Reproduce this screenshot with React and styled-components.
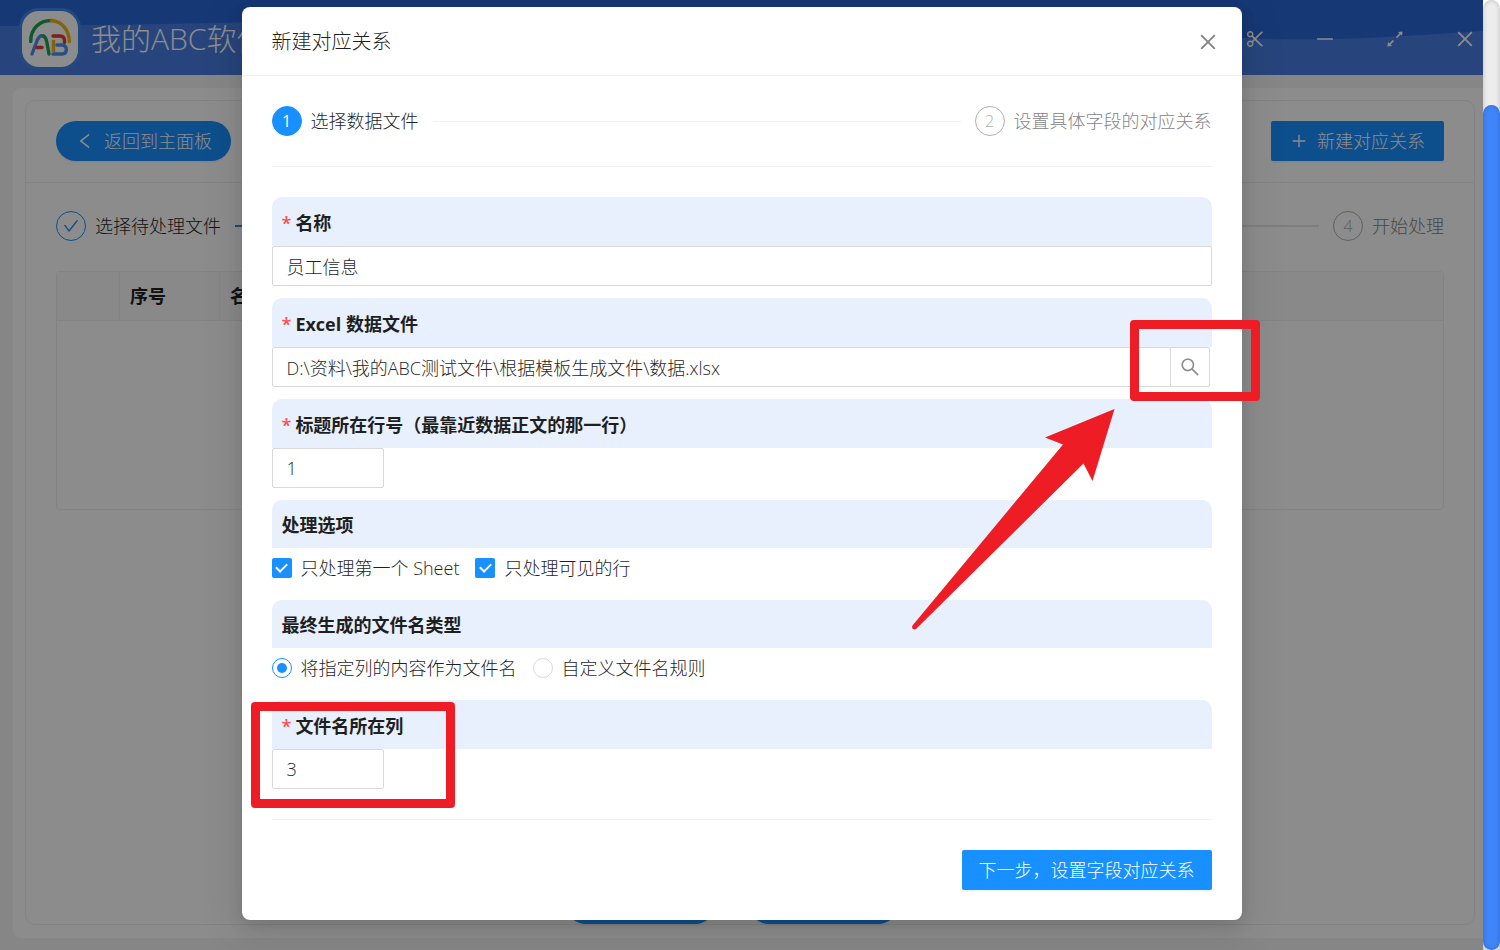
import React, { useState } from 'react'
import styled, { createGlobalStyle } from 'styled-components'
import {
  AiOutlineArrowsAlt,
  AiOutlineCheck,
  AiOutlineClose,
  AiOutlineLeft,
  AiOutlineMinus,
  AiOutlinePlus,
  AiOutlineScissor,
  AiOutlineSearch,
} from 'react-icons/ai'

const GlobalStyle = createGlobalStyle`
  * { box-sizing: border-box; }
  body {
    margin: 0;
    overflow: hidden;
    font-family: "Open Sans", "Noto Sans CJK SC", sans-serif;
    font-size: 18px;
    font-weight: 300;
    line-height: 28px;
    color: #1f1f1f;
  }
  button, input { font: inherit; color: inherit; }
  button { cursor: pointer; }
  svg { display: block; flex: none; }
`;

const Screen = styled.div`
  display: flex;
  height: 100vh;
`;

const Main = styled.div`
  position: relative;
  flex: 1;
  min-width: 0;
  display: flex;
  flex-direction: column;
  overflow: hidden;
  background: #f5f5f5;
`;

const ScrollTrack = styled.div`
  flex: none;
  width: 17px;
  display: flex;
  flex-direction: column;
  justify-content: flex-end;
  border-radius: 10px 10px 0 0;
  background: #ededed;
  box-shadow: inset 0 0 5px rgba(0, 0, 0, 0.2);
`;

const ScrollThumb = styled.div`
  height: 89%;
  border-radius: 10px;
  background: #3f85f9;
  box-shadow: inset 0 0 5px rgba(0, 0, 0, 0.2);
`;

const TopBar = styled.header`
  position: relative;
  flex: none;
  height: 75px;
  padding: 2px 7px 0 19px;
  display: flex;
  align-items: center;
  justify-content: space-between;
  background: #2866d6;
  color: #fff;
`;

const Wave = styled.svg`
  position: absolute;
  inset: 0;
  width: 100%;
  height: 100%;
`;

const Brand = styled.div`
  position: relative;
  display: flex;
  align-items: center;
  gap: 10px;
  font-size: 30px;
  line-height: 40px;
`;

const LogoBox = styled.div`
  width: 62px;
  height: 62px;
  padding: 6px;
  border: 3px solid #3f87ea;
  border-radius: 20px;
  background: #fff;
`;

const WindowButtons = styled.div`
  position: relative;
  display: flex;
  gap: 48px;
`;

const IconButton = styled.button`
  padding: 0;
  border: 0;
  background: none;
  font-size: 22px;
  color: ${(p) => p.$color || '#fff'};
`;

const Card = styled.main`
  flex: 1;
  margin: 13px 0 12px 13px;
  padding: 12px 8px 13px 12px;
  display: flex;
  border-radius: 8px 0 0 8px;
  background: #fff;
`;

const Panel = styled.section`
  flex: 1;
  min-width: 0;
  display: flex;
  flex-direction: column;
  border: 1px solid #efefef;
  border-radius: 10px;
`;

const Toolbar = styled.div`
  height: 82px;
  padding: 0 30px 2px;
  display: flex;
  align-items: center;
  justify-content: space-between;
  border-bottom: 1px solid #efefef;
`;

const Button = styled.button`
  height: 40px;
  padding: 0 ${(p) => p.$pad || 17}px;
  display: flex;
  align-items: center;
  gap: 9px;
  border: 0;
  border-radius: ${(p) => (p.$round ? '20px' : '2px')};
  background: #1890ff;
  color: #fff;
  box-shadow: 0 2px 0 rgba(0, 0, 0, 0.04);
`;

const StepRow = styled.div`
  display: flex;
  align-items: center;
  gap: 14px;
  padding: ${(p) => p.$pad || '0'};
`;

const Step = styled.div`
  display: flex;
  align-items: center;
  gap: 9px;
  color: ${(p) => (p.$muted ? '#858585' : '#1f1f1f')};
`;

const StepDot = styled.span`
  width: 30px;
  height: 30px;
  display: flex;
  align-items: center;
  justify-content: center;
  border: 1px solid ${(p) => (p.$kind === 'wait' ? '#b0b0b0' : '#1890ff')};
  border-radius: 50%;
  background: ${(p) => (p.$kind === 'active' ? '#1890ff' : 'transparent')};
  color: ${(p) => ({ active: '#fff', done: '#1890ff', wait: '#b0b0b0' })[p.$kind]};
  font-size: 16px;
  font-weight: ${(p) => (p.$kind === 'active' ? 400 : 300)};
`;

const Tail = styled.span`
  flex: 1;
  height: ${(p) => p.$thick || 1}px;
  background: ${(p) => p.$color || '#f0f0f0'};
`;

const DataTable = styled.table`
  margin: 0 30px;
  border: 1px solid #efefef;
  border-radius: 4px;
  border-spacing: 0;
  table-layout: fixed;

  th {
    height: 49px;
    padding: 0 10px;
    border-right: 1px solid #efefef;
    border-bottom: 1px solid #efefef;
    background: #fafafa;
    font-weight: 700;
    text-align: left;
  }
  th:first-child { width: 63px; }
  th:nth-child(2) { width: 100px; }
  th:last-child { border-right: 0; }
  td { height: 188px; }
`;

const FooterBar = styled.div`
  margin-top: auto;
  padding-right: 36px;
  display: flex;
  justify-content: center;
  gap: 34px;
`;

const FooterButton = styled(Button)`
  width: 149px;
`;

const Overlay = styled.div`
  position: absolute;
  inset: 0;
  padding: 7px 0 30px;
  display: flex;
  align-items: flex-start;
  justify-content: center;
  background: rgba(0, 0, 0, 0.45);
`;

const Dialog = styled.div`
  position: relative;
  width: 100%;
  max-width: 1000px;
  border-radius: 8px;
  background: #fff;
  box-shadow: 0 6px 16px rgba(0, 0, 0, 0.1), 0 9px 40px 8px rgba(0, 0, 0, 0.08);
`;

const DialogHeader = styled.div`
  height: 69px;
  padding: 2px 23px 0 30px;
  display: flex;
  align-items: center;
  justify-content: space-between;
  border-bottom: 1px solid #f0f0f0;
`;

const DialogTitle = styled.h1`
  margin: 0;
  font-size: 20px;
  font-weight: 300;
`;

const DialogBody = styled.form`
  padding: 30px;
`;

const Divider = styled.hr`
  margin: 30px 0;
  border: 0;
  border-top: 1px solid #f0f0f0;
`;

const Fields = styled.div`
  display: flex;
  flex-direction: column;
  gap: 12px;
`;

const FieldLabel = styled.label`
  height: ${(p) => (p.$required ? 49 : 48)}px;
  padding: 2px 10px 0;
  display: flex;
  align-items: center;
  gap: 4px;
  border-radius: 10px 10px 0 0;
  background: #e8effd;
  font-weight: 700;
`;

const Star = styled.span`
  color: #ff4d4f;
  font-weight: 600;
`;

const TextInput = styled.input`
  display: block;
  width: ${(p) => p.$width || '100%'};
  height: 40px;
  padding: 0 14px;
  border: 1px solid #d9d9d9;
  border-radius: 2px;
  outline: 0;
  background: #fff;
`;

const SearchRow = styled.div`
  display: flex;
  padding-right: 2px;
`;

const SearchButton = styled.button`
  flex: none;
  width: 40px;
  margin-left: -1px;
  display: flex;
  align-items: center;
  justify-content: center;
  border: 1px solid #d9d9d9;
  border-radius: 0 2px 2px 0;
  background: #fff;
  color: #8c8c8c;
`;

const Choices = styled.div`
  height: 40px;
  display: flex;
  align-items: center;
  gap: 16px;
`;

const Choice = styled.label`
  display: flex;
  align-items: center;
  gap: 9px;
`;

const CheckBox = styled.input`
  appearance: none;
  width: 20px;
  height: 20px;
  margin: 0;
  display: grid;
  justify-content: center;
  align-content: start;
  padding-top: 3px;
  border: 1px solid #d9d9d9;
  border-radius: 2px;

  &:checked {
    border: 0;
    background: #1890ff;
  }
  &:checked::after {
    content: '';
    width: 5px;
    height: 9px;
    border: solid #fff;
    border-width: 0 2px 2px 0;
    transform: rotate(45deg);
  }
`;

const Radio = styled.input`
  appearance: none;
  width: 20px;
  height: 20px;
  margin: 0;
  display: grid;
  place-content: center;
  border: 1px solid #d9d9d9;
  border-radius: 50%;

  &:checked { border-color: #1890ff; }
  &:checked::after {
    content: '';
    width: 10px;
    height: 10px;
    border-radius: 50%;
    background: #1890ff;
  }
`;

const Actions = styled.div`
  display: flex;
  justify-content: flex-end;
`;

// highlight frames and arrow lie on top of the dialog
const Highlight = styled.div`
  position: absolute;
  left: ${(p) => p.$x}px;
  top: ${(p) => p.$y}px;
  width: ${(p) => p.$w}px;
  height: ${(p) => p.$h}px;
  border: 9px solid #ee1c25;
  border-radius: 4px;
  pointer-events: none;
`;

const Arrow = styled.svg`
  position: absolute;
  left: 668px;
  top: 400px;
  pointer-events: none;
`;

function Logo() {
  return (
    <svg width="44" height="44" viewBox="0 0 44 44" fill="none" strokeWidth="3.4" strokeLinecap="round" strokeLinejoin="round">
      <path d="M2.700 24.500C2.700 12 11 3.500 23.500 3.500" stroke="#1da452" />
      <path d="M23.500 3.500C34 4.500 41.300 13 41.300 24.500" stroke="#f0b310" />
      <path d="M4 37L9.500 22.500Q12 17.500 15.500 19" stroke="#4f8ff0" />
      <path d="M15.500 19Q18 20.500 18.800 25L21 37" stroke="#1da452" />
      <path d="M9 30.500H14" stroke="#e53935" />
      <path d="M25.500 23V35" stroke="#f0b310" strokeLinecap="butt" />
      <path d="M25 19H32Q36.500 19 36.500 24V25.500" stroke="#e53935" />
      <path d="M29 28H34Q38.300 28.500 38.300 32.500Q38.300 37 34 37H25" stroke="#4f8ff0" />
    </svg>
  )
}

function Field({ id, label, required, children }) {
  return (
    <div>
      <FieldLabel htmlFor={id} as={id ? 'label' : 'div'} $required={required}>
        {required && <Star>*</Star>}
        {label}
      </FieldLabel>
      {children}
    </div>
  )
}

function Background() {
  return (
    <>
      <TopBar>
        <Wave viewBox="0 0 1483 75" preserveAspectRatio="none">
          <path d="M0 26C120 25 190 24 260 22C520 16 800 20 1000 30C1120 36 1200 38 1242 38C1340 42 1400 36 1483 31V75H0Z" fill="#477ee2" />
        </Wave>
        <Brand>
          <LogoBox><Logo /></LogoBox>
          我的ABC软件
        </Brand>
        <WindowButtons>
          <IconButton aria-label="截图"><AiOutlineScissor /></IconButton>
          <IconButton aria-label="最小化"><AiOutlineMinus /></IconButton>
          <IconButton aria-label="最大化"><AiOutlineArrowsAlt /></IconButton>
          <IconButton aria-label="关闭"><AiOutlineClose /></IconButton>
        </WindowButtons>
      </TopBar>
      <Card>
        <Panel>
          <Toolbar>
            <Button $round $pad={19}><AiOutlineLeft size={20} />返回到主面板</Button>
            <Button $pad={19}><AiOutlinePlus size={18} />新建对应关系</Button>
          </Toolbar>
          <StepRow $pad="28px 30px 30px">
            <Step>
              <StepDot $kind="done"><AiOutlineCheck size={18} /></StepDot>
              选择待处理文件
            </Step>
            <Tail $thick={2} $color="#1890ff" />
            <Tail $thick={2} $color="#e6e6e6" />
            <Step $muted>
              <StepDot $kind="wait">4</StepDot>
              开始处理
            </Step>
          </StepRow>
          <DataTable>
            <thead>
              <tr><th /><th>序号</th><th>名称</th></tr>
            </thead>
            <tbody>
              <tr><td colSpan={3} /></tr>
            </tbody>
          </DataTable>
          <FooterBar>
            <FooterButton $round aria-label="上一步" />
            <FooterButton $round aria-label="下一步" />
          </FooterBar>
        </Panel>
      </Card>
    </>
  )
}

function MappingDialog() {
  const [nameType, setNameType] = useState('column');

  return (
    <Dialog role="dialog" aria-labelledby="dialog-title">
      <DialogHeader>
        <DialogTitle id="dialog-title">新建对应关系</DialogTitle>
        <IconButton aria-label="关闭" $color="#808080"><AiOutlineClose /></IconButton>
      </DialogHeader>
      <DialogBody onSubmit={(e) => e.preventDefault()}>
        <StepRow>
          <Step><StepDot $kind="active">1</StepDot>选择数据文件</Step>
          <Tail />
          <Step $muted><StepDot $kind="wait">2</StepDot>设置具体字段的对应关系</Step>
        </StepRow>
        <Divider />
        <Fields>
          <Field id="name" label="名称" required>
            <TextInput id="name" defaultValue="员工信息" />
          </Field>
          <Field id="file" label="Excel 数据文件" required>
            <SearchRow>
              <TextInput id="file" defaultValue={'D:\\资料\\我的ABC测试文件\\根据模板生成文件\\数据.xlsx'} />
              <SearchButton type="button" aria-label="选择文件"><AiOutlineSearch size={22} /></SearchButton>
            </SearchRow>
          </Field>
          <Field id="title-row" label="标题所在行号（最靠近数据正文的那一行）" required>
            <TextInput id="title-row" $width="112px" inputMode="numeric" defaultValue="1" />
          </Field>
          <Field label="处理选项">
            <Choices>
              <Choice><CheckBox type="checkbox" defaultChecked />只处理第一个 Sheet</Choice>
              <Choice><CheckBox type="checkbox" defaultChecked />只处理可见的行</Choice>
            </Choices>
          </Field>
          <Field label="最终生成的文件名类型">
            <Choices>
              <Choice>
                <Radio type="radio" name="nameType" checked={nameType === 'column'} onChange={() => setNameType('column')} />
                将指定列的内容作为文件名
              </Choice>
              <Choice>
                <Radio type="radio" name="nameType" checked={nameType === 'custom'} onChange={() => setNameType('custom')} />
                自定义文件名规则
              </Choice>
            </Choices>
          </Field>
          <Field id="column" label="文件名所在列" required>
            <TextInput id="column" $width="112px" inputMode="numeric" defaultValue="3" />
          </Field>
        </Fields>
        <Divider />
        <Actions>
          <Button type="submit">下一步，设置字段对应关系</Button>
        </Actions>
      </DialogBody>
      <Highlight $x={888} $y={313} $w={130} $h={81} />
      <Highlight $x={9} $y={695} $w={204} $h={106} />
      <Arrow width="208" height="226" viewBox="0 0 208 226">
        <path d="M204.500 2L135 30.500L153 37.500L2.500 218.500Q1.500 221 3 222Q5 223 6.500 221.500L173.500 56.500L182.500 74Z" fill="#ee1c25" />
      </Arrow>
    </Dialog>
  )
}

export default function App() {
  return (
    <>
      <GlobalStyle />
      <Screen>
        <Main>
          <Background />
          <Overlay>
            <MappingDialog />
          </Overlay>
        </Main>
        <ScrollTrack>
          <ScrollThumb />
        </ScrollTrack>
      </Screen>
    </>
  )
}
